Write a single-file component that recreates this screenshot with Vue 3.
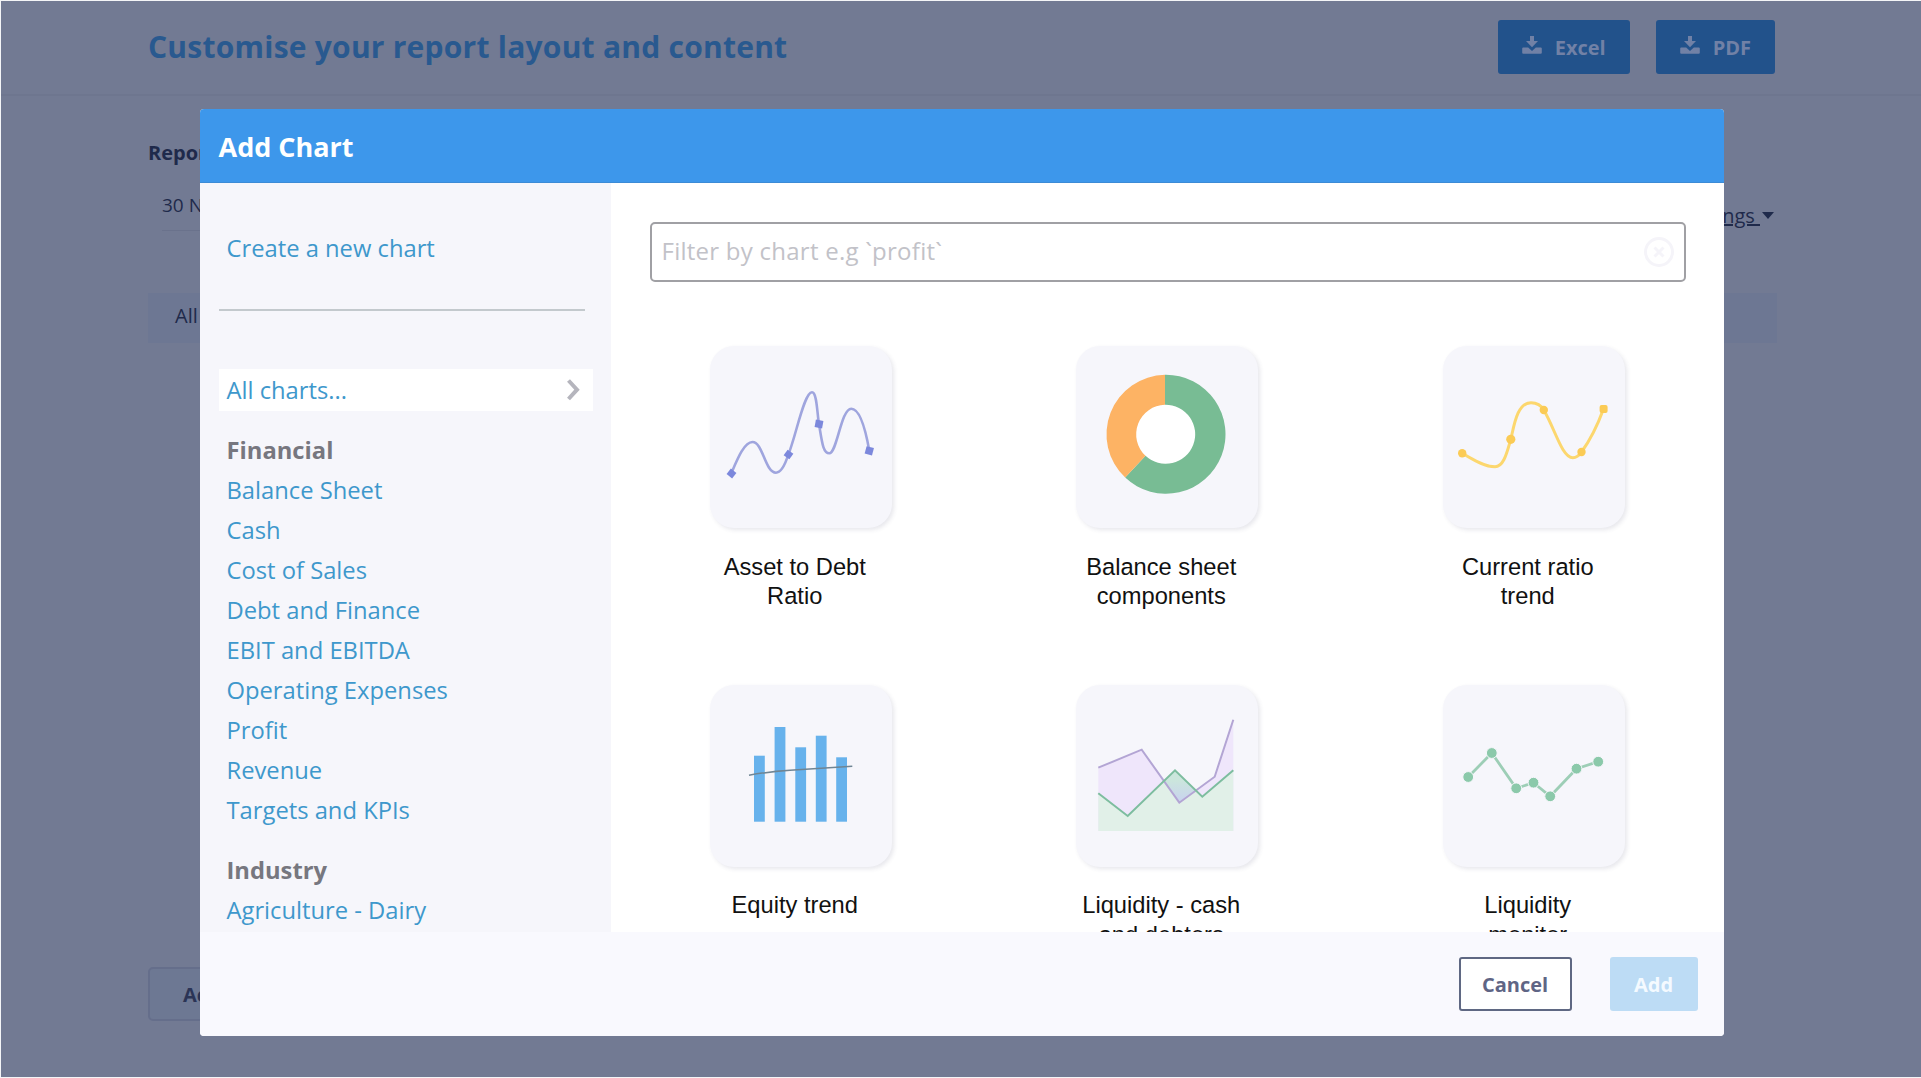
<script setup>
import { ref } from 'vue'

const filter = ref('')

const groups = [
  {
    name: 'Financial',
    items: [
      'Balance Sheet',
      'Cash',
      'Cost of Sales',
      'Debt and Finance',
      'EBIT and EBITDA',
      'Operating Expenses',
      'Profit',
      'Revenue',
      'Targets and KPIs'
    ]
  },
  { name: 'Industry', items: ['Agriculture - Dairy'] }
]

const charts = [
  { type: 'spline', label: 'Asset to Debt Ratio' },
  { type: 'donut', label: 'Balance sheet components' },
  { type: 'curve', label: 'Current ratio trend' },
  { type: 'bars', label: 'Equity trend' },
  { type: 'area', label: 'Liquidity - cash and debtors' },
  { type: 'dots', label: 'Liquidity monitor' }
]

const bars = [
  { x: 44, y: 70.7 },
  { x: 64.6, y: 42 },
  { x: 85.3, y: 62.3 },
  { x: 105.8, y: 50.7 },
  { x: 126.2, y: 72.3 }
]

const dots = [
  [25.2, 92],
  [48.8, 68],
  [73.2, 103.3],
  [90.5, 97.7],
  [107.2, 111.3],
  [133.5, 83.7],
  [155.2, 76.7]
]
</script>

<template>
  <div class="page">
    <header class="page-header">
      <h1>Customise your report layout and content</h1>
      <div class="exports">
        <button v-for="name in ['Excel', 'PDF']" :key="name" class="export-btn">
          <svg width="20" height="18" viewBox="0 0 20 18" fill="currentColor">
            <path d="M8 0h4v5h4l-6 6.2L4 5h4z" />
            <path d="M1.2 11.6h5L10 15l3.800-3.400h5q1 0 1 1v4.200q0 1-1 1H1.200q-1 0-1-1v-4.200q0-1 1-1z" />
          </svg>
          <span>{{ name }}</span>
        </button>
      </div>
    </header>

    <main class="report">
      <div class="toolbar">
        <div>
          <div class="report-label">Report</div>
          <div class="report-date">30 Nov</div>
        </div>
        <a class="settings"><span>Settings&nbsp;</span><i class="caret"></i></a>
      </div>
      <div class="tab-strip">All</div>
      <button class="add-content">Add</button>
    </main>

    <div class="modal">
      <div class="modal-header">Add Chart</div>
      <div class="modal-body">
        <aside class="sidebar">
          <a class="create">Create a new chart</a>
          <hr />
          <a class="all-charts">
            All charts...
            <svg width="16" height="24" viewBox="0 0 16 24" fill="none" stroke="#b5b5bd" stroke-width="4">
              <path d="M2.500 2.500l8.500 9.200-8.500 9.300" />
            </svg>
          </a>
          <div v-for="group in groups" :key="group.name" class="group">
            <h3>{{ group.name }}</h3>
            <a v-for="item in group.items" :key="item">{{ item }}</a>
          </div>
        </aside>

        <section class="content">
          <div class="filter">
            <input v-model="filter" placeholder="Filter by chart e.g `profit`" />
            <svg width="32" height="32" viewBox="0 0 32 32" fill="none" stroke="#f5f4f9" stroke-width="3">
              <circle cx="16" cy="16" r="13.500" />
              <path d="M11.500 11.500l9 9M20.500 11.500l-9 9" />
            </svg>
          </div>

          <div class="grid">
            <div v-for="chart in charts" :key="chart.label" class="chart">
              <div class="tile">
                <svg v-if="chart.type === 'spline'" viewBox="0 0 182 182">
                  <path
                    d="M21.300 127.300C27 114 34 96 42.500 96C53 96 55 126.700 66 126.700C71 126.700 75 119 78.300 108.700C86 90 94 46.300 102 46.300C107 46.300 107 67 109 78C112 96 113 107.300 119.300 107.300C127 107.300 131 62.700 141.300 62.700C150 62.700 156 86 159.300 104.700"
                    fill="none" stroke="#9fa5de" stroke-width="2.600"
                  />
                  <g fill="#7c88dc">
                    <rect x="18" y="124" width="7" height="7" transform="rotate(38 21.500 127.500)" />
                    <rect x="75" y="105" width="7" height="7" transform="rotate(35 78.500 108.500)" />
                    <rect x="105.200" y="74.200" width="7.600" height="7.600" transform="rotate(10 109 78)" />
                    <rect x="155.500" y="101" width="7.600" height="7.600" transform="rotate(15 159.300 104.800)" />
                  </g>
                </svg>

                <svg v-else-if="chart.type === 'donut'" viewBox="0 0 182 182">
                  <circle cx="90" cy="88.300" r="30" fill="#fff" />
                  <path d="M89 28.800A59.500 59.500 0 1 1 49.200 131.600L69.500 109.800A29.500 29.500 0 1 0 89 58.800z" fill="#78bc94" />
                  <path d="M89 28.800A59.500 59.500 0 0 0 49.200 131.600L69.500 109.800A29.500 29.500 0 0 1 89 58.800z" fill="#fdb364" />
                </svg>

                <svg v-else-if="chart.type === 'curve'" viewBox="0 0 182 182">
                  <path
                    d="M19.200 107.300C28 112 40 120.700 52 120.700C61 120.700 64 106 67.800 93.300C71 80 74 56.700 88 56.700C94 56.700 98 59 100.800 64C112 83 119 111.700 129.800 111.700C134 111.700 136.500 109 138.500 106C148 93 155 78 160.500 63"
                    fill="none" stroke="#fcd76e" stroke-width="3"
                  />
                  <g fill="#fbcb55">
                    <circle cx="19.200" cy="107.300" r="4.200" />
                    <circle cx="67.800" cy="93.300" r="4.600" />
                    <circle cx="100.800" cy="64" r="4.200" />
                    <circle cx="138.500" cy="106" r="4.200" />
                    <rect x="156.600" y="59" width="8" height="8" rx="2" />
                  </g>
                </svg>

                <svg v-else-if="chart.type === 'bars'" viewBox="0 0 182 182">
                  <rect v-for="bar in bars" :key="bar.x" :x="bar.x" :y="bar.y" width="10.800" :height="136.700 - bar.y" fill="#67b2ec" />
                  <path d="M39 90.200Q60 86.500 80 85.300L142.300 81.300" fill="none" stroke="#6f8594" stroke-width="1.500" />
                </svg>

                <svg v-else-if="chart.type === 'area'" viewBox="0 0 182 182">
                  <defs>
                    <linearGradient id="overlap" x1="0" y1="0" x2="0" y2="1">
                      <stop offset="0.300" stop-color="#cbe6dc" />
                      <stop offset="1" stop-color="#c9d2f0" />
                    </linearGradient>
                  </defs>
                  <path d="M22.300 82.700L65.700 64.700L103.300 117.700L138.700 91.700L157.300 34.700V146H22.300z" fill="#efe6fb" />
                  <path d="M22.300 108.300L51.700 131L99 85.300L126.300 111.700L157.300 85.300V146H22.300z" fill="#e1f0e8" />
                  <path d="M88 96L99 85.300L119.300 105.500L103.300 117.700z" fill="url(#overlap)" />
                  <path d="M22.300 82.700L65.700 64.700L103.300 117.700L138.700 91.700L157.300 34.700" fill="none" stroke="#b3a5d4" stroke-width="2" />
                  <path d="M22.300 108.300L51.700 131L99 85.300L126.300 111.700L157.300 85.300" fill="none" stroke="#7dbd9f" stroke-width="2" />
                </svg>

                <svg v-else viewBox="0 0 182 182">
                  <polyline :points="dots.join(' ')" fill="none" stroke="#9dceb6" stroke-width="2.800" />
                  <circle v-for="[x, y] in dots" :key="x" :cx="x" :cy="y" r="5.400" fill="#8bc9aa" stroke="#f6f6fb" stroke-width="1" />
                </svg>
              </div>
              <div class="label">{{ chart.label }}</div>
            </div>
          </div>
        </section>
      </div>
      <footer class="modal-footer">
        <button class="cancel">Cancel</button>
        <button class="add">Add</button>
      </footer>
    </div>
  </div>
</template>

<style>
body {
  background: #fff;
  overflow: hidden;
}
</style>

<style scoped>
.page {
  position: relative;
  box-sizing: border-box;
  width: 1921px;
  height: 1078px;
  overflow: hidden;
  background: #727a93;
  border: solid #f4f5f7;
  border-width: 1px 0 1px 1px;
  font-family: 'Open Sans', 'Noto Sans', sans-serif;
  color: #1f2a4b;
}

button {
  font-family: inherit;
  font-weight: 700;
  font-size: 20px;
  box-sizing: border-box;
  height: 54px;
  border: 0;
  border-radius: 3px;
  padding: 0;
}

.page-header {
  display: flex;
  justify-content: space-between;
  align-items: flex-start;
  box-sizing: border-box;
  height: 95px;
  padding: 18px 146px 0 147px;
  border-bottom: 2px solid #6e768f;
}

h1 {
  margin: 7px 0 0;
  font-size: 30px;
  line-height: 41px;
  letter-spacing: 0.24px;
  font-weight: 700;
  color: #29598f;
}

.exports {
  display: flex;
  gap: 26px;
  margin-top: 1px;
}

.export-btn {
  display: flex;
  align-items: center;
  gap: 13px;
  padding: 0 24px;
  background: #22528b;
  color: #7181a6;
}

.export-btn svg {
  margin-top: -4px;
}

.report {
  padding: 43px 144px 0 147px;
}

.toolbar {
  display: flex;
  justify-content: space-between;
  height: 154px;
}

.report-label {
  font-size: 20px;
  line-height: 28px;
  font-weight: 700;
}

.report-date {
  margin: 20px 0 0 14px;
  height: 43px;
  border-bottom: 1px solid #6a728c;
  font-size: 19px;
  line-height: 36px;
}

.settings {
  display: flex;
  align-items: center;
  gap: 2px;
  height: 28px;
  margin: 62px 3px 0 0;
  font-size: 20px;
}

.settings span {
  text-decoration: underline;
}

.caret {
  border: 6px solid transparent;
  border-top: 7px solid #1f2a4b;
  border-bottom: 0;
}

.tab-strip {
  height: 50px;
  padding-left: 27px;
  background: #6d7793;
  font-size: 20px;
  line-height: 45px;
}

.add-content {
  display: block;
  width: 140px;
  margin-top: 624px;
  padding-left: 33px;
  text-align: left;
  background: #6d7893;
  border: 2px solid #656e8b;
  border-radius: 5px;
  color: #2b3456;
}

.modal {
  position: absolute;
  left: 198.5px;
  top: 108px;
  width: 1524px;
  height: 927px;
  display: flex;
  flex-direction: column;
  overflow: hidden;
  border-radius: 4px;
  background: #fff;
}

.modal-header {
  flex: none;
  box-sizing: border-box;
  height: 74px;
  padding-left: 19px;
  border-bottom: 1px solid #3c8bd6;
  background: #3d97eb;
  color: #fff;
  font-size: 27px;
  font-weight: 700;
  line-height: 75px;
}

.modal-body {
  flex: 1;
  display: flex;
  min-height: 0;
}

.sidebar {
  box-sizing: border-box;
  width: 411px;
  padding: 45px 18px 0 19px;
  background: #f6f6fb;
  overflow: hidden;
  font-size: 23.75px;
  line-height: 40.05px;
  color: #3e98cc;
}

.create,
.group a,
.group h3 {
  display: block;
  padding-left: 8px;
}

.sidebar hr {
  width: 366px;
  height: 2px;
  margin: 41px 0 58px;
  border: 0;
  background: #c3c9cd;
}

.all-charts {
  display: flex;
  align-items: center;
  justify-content: space-between;
  height: 42px;
  padding: 0 11px 0 8px;
  background: #fff;
}

.group {
  margin-bottom: 20px;
}

.all-charts + .group {
  margin-top: 18.5px;
}

.group h3 {
  margin: 0;
  font-size: 23.75px;
  font-weight: 700;
  color: #77777f;
}

.content {
  flex: 1;
  min-width: 0;
  overflow: hidden;
}

.filter {
  display: flex;
  align-items: center;
  box-sizing: border-box;
  width: 1036px;
  height: 60px;
  margin: 38.5px 0 0 39px;
  padding: 0 9px 0 10px;
  border: 2px solid #a0a0a4;
  border-radius: 5px;
}

.filter input {
  flex: 1;
  padding: 0 0 2px;
  border: 0;
  outline: none;
  background: none;
  font: 24px 'Open Sans', 'Noto Sans', sans-serif;
  letter-spacing: 0.25px;
}

.filter input::placeholder {
  color: #c2c2c8;
  opacity: 1;
}

.grid {
  display: grid;
  grid-template-columns: repeat(3, 366.5px);
  grid-auto-rows: 265px;
  row-gap: 73.5px;
  margin: 64.5px 0 0 1px;
}

.chart {
  display: flex;
  flex-direction: column;
  align-items: center;
}

.tile {
  width: 182px;
  height: 182px;
  margin-left: 12px;
  border-radius: 24px;
  background: #f6f6fb;
  box-shadow: 2px 2px 4px rgba(60, 60, 100, 0.12);
}

.tile svg {
  display: block;
}

.label {
  width: 170px;
  margin-top: 24.5px;
  text-align: center;
  font-family: 'Liberation Sans', Arial, sans-serif;
  font-size: 23.7px;
  line-height: 29.5px;
  color: #111;
}

.modal-footer {
  flex: none;
  display: flex;
  justify-content: flex-end;
  box-sizing: border-box;
  height: 104px;
  gap: 38px;
  padding: 25px 26px 0 0;
  background: #f9f9fe;
}

.cancel {
  width: 113px;
  border: 2px solid #5f6883;
  background: #fff;
  color: #5f6585;
}

.add {
  width: 88px;
  background: #bddcf5;
  color: #f4faff;
}
</style>
